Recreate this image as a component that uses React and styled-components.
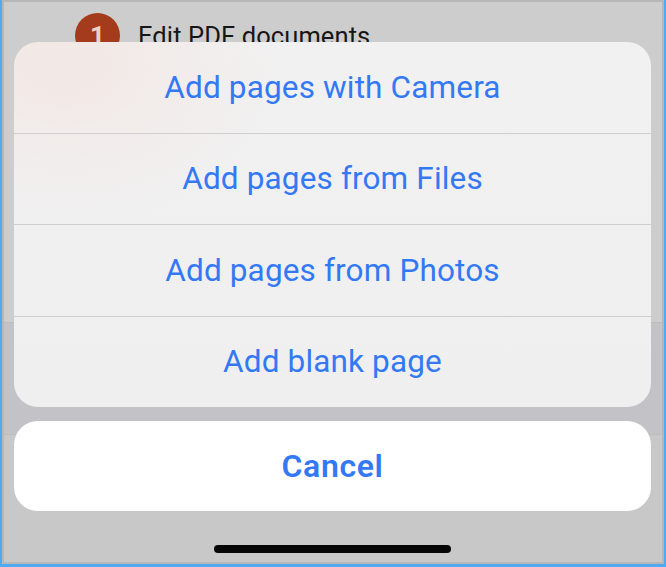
import React from "react";
import styled, { createGlobalStyle } from "styled-components";

const GlobalStyle = createGlobalStyle`
  html, body {
    margin: 0;
    padding: 0;
    background: #c8c8c8;
  }
  body {
    font-family: Roboto, "Liberation Sans", Arial, sans-serif;
    -webkit-font-smoothing: antialiased;
  }
`;

const Frame = styled.div`
  width: 666px;
  height: 567px;
  box-sizing: border-box;
  border-left: 2px solid #4faaf0;
  border-right: 2px solid #4faaf0;
  border-bottom: 3px solid #4faaf0;
  overflow: hidden;
`;

const Screen = styled.div`
  position: relative;
  height: 100%;
  box-sizing: border-box;
  border: 2px solid #b7b7b7;
  display: flex;
  flex-direction: column;
  overflow: hidden;
`;

const Band = styled.div`
  height: ${({ h }) => (h ? `${h}px` : "auto")};
  flex: ${({ h }) => (h ? "none" : "1")};
  background: ${({ tone }) => tone};
  border-top: ${({ line }) => (line ? `1px solid ${line}` : "none")};
`;

const ListRow = styled.div`
  display: flex;
  align-items: center;
  gap: 18px;
  padding: 11px 0 0 71px;
`;

const StepBadge = styled.div`
  width: 45px;
  height: 45px;
  border-radius: 50%;
  background: #a43b1c;
  color: #e9d3cb;
  display: flex;
  align-items: center;
  justify-content: center;
  font-size: 26px;
  font-weight: 700;
`;

const ListText = styled.span`
  font-size: 25.5px;
  letter-spacing: 0.1px;
  color: #161616;
`;

const Overlay = styled.div`
  position: absolute;
  inset: 0;
  display: flex;
  flex-direction: column;
  padding: 40px 11px 0 10px;
  gap: 14px;
`;

const Sheet = styled.div`
  height: 365px;
  border-radius: 24px;
  overflow: hidden;
  display: flex;
  flex-direction: column;
  background:
    radial-gradient(ellipse 220px 160px at 50px 20px, rgba(243, 230, 226, 0.85), rgba(243, 230, 226, 0) 100%),
    linear-gradient(180deg, #f1f1f1 0%, #efeff0 100%);
`;

const Option = styled.button`
  flex: 1;
  border: none;
  background: transparent;
  border-top: ${({ first }) => (first ? "none" : "1px solid #cfcfd2")};
  font-family: inherit;
  font-size: 31.5px;
  letter-spacing: 0.15px;
  font-weight: 400;
  color: #3479f4;
  padding: 0;
  cursor: pointer;
`;

const CancelButton = styled.button`
  height: 90px;
  flex: none;
  border: none;
  border-radius: 24px;
  background: #ffffff;
  font-family: inherit;
  font-size: 32px;
  letter-spacing: 0.6px;
  font-weight: 600;
  color: #3479f4;
  cursor: pointer;
`;

const HomeIndicator = styled.div`
  align-self: center;
  width: 237px;
  height: 8px;
  border-radius: 4px;
  background: #050505;
  margin-top: 20px;
`;

const options = [
  "Add pages with Camera",
  "Add pages from Files",
  "Add pages from Photos",
  "Add blank page",
];

export default function App() {
  return (
    <>
      <GlobalStyle />
      <Frame>
        <Screen>
          <Band h={320} tone="#cdcdcd">
            <ListRow>
              <StepBadge>1</StepBadge>
              <ListText>Edit PDF documents</ListText>
            </ListRow>
          </Band>
          <Band h={111} tone="#c3c3c7" line="#bcbcbf" />
          <Band tone="#c8c8c8" line="#bdbdbd" />

          <Overlay>
            <Sheet>
              {options.map((label, i) => (
                <Option key={label} first={i === 0}>
                  {label}
                </Option>
              ))}
            </Sheet>
            <CancelButton>Cancel</CancelButton>
            <HomeIndicator />
          </Overlay>
        </Screen>
      </Frame>
    </>
  );
}
